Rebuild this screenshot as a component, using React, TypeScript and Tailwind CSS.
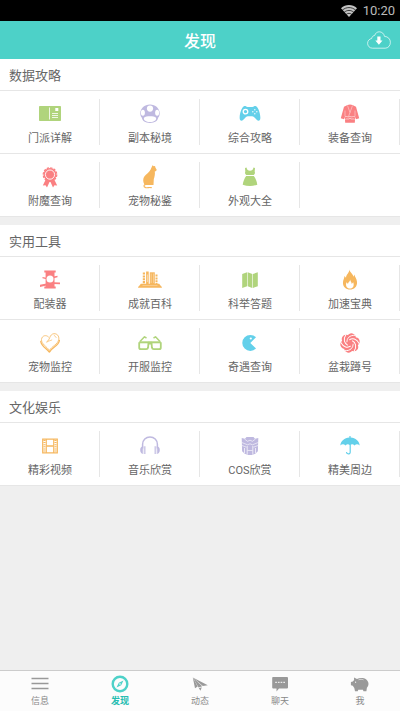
import type { ReactNode } from "react";

const RED = "#fa8082";
const GREEN = "#b0d47c";
const BLUE = "#63d0ea";
const ORANGE = "#f6b75e";
const PURPLE = "#bfb9e0";

function Icon({ children }: { children: ReactNode }) {
  return (
    <svg viewBox="0 0 24 24" className="size-6" fill="none" aria-hidden="true">
      {children}
    </svg>
  );
}

const BookIcon = () => (
  <Icon>
    <rect x="1" y="4" width="22" height="15" rx="0.7" fill={GREEN} />
    <path d="M11.5 5.500V17.500M14 11.500H20M14 13.500H20M14 15.500H20" stroke="#fff" strokeWidth="0.8" />
    <rect x="17.300" y="6" width="3" height="3" fill="#fff" />
  </Icon>
);

const MushroomIcon = () => (
  <Icon>
    <path d="M12 2.600C6.500 2.600 2.300 6.600 2.300 11.500c0 1.800.6 3.300 1.600 4.200.2 3 3.300 5.200 8.100 5.200s7.900-2.200 8.100-5.200c1-.9 1.600-2.400 1.600-4.200 0-4.900-4.200-8.900-9.700-8.900Z" fill={PURPLE} />
    <circle cx="12" cy="6.600" r="3.100" fill="#fff" />
    <ellipse cx="4.900" cy="10.800" rx="2" ry="3" fill="#fff" />
    <ellipse cx="19.100" cy="10.800" rx="2" ry="3" fill="#fff" />
    <path d="M6 15.700c2-1.900 10-1.900 12 0 .8 2.500-2 4.300-6 4.300s-6.800-1.800-6-4.300Z" fill="#fff" />
  </Icon>
);

const GamepadIcon = () => (
  <Icon>
    <path d="M6 4.200c1.600-.5 2.300.6 3.500.8h5c1.200-.2 1.900-1.300 3.500-.8 2.300.7 4.700 8 4.300 12.300-.2 2.500-2.100 2.900-3.600 1.300-1.900-2-3-3.600-4.700-3.600h-4c-1.700 0-2.800 1.600-4.700 3.600-1.500 1.600-3.400 1.200-3.600-1.300C1.300 12.200 3.700 4.900 6 4.200Z" fill={BLUE} />
    <circle cx="7.500" cy="9.600" r="2.300" stroke="#fff" strokeWidth="1.300" />
    <g fill="#fff" fillOpacity="0.850">
      <circle cx="16.800" cy="7.700" r="0.800" />
      <circle cx="16.800" cy="11.700" r="0.800" />
      <circle cx="14.800" cy="9.700" r="0.800" />
      <circle cx="18.800" cy="9.700" r="0.800" />
    </g>
  </Icon>
);

const RobeIcon = () => (
  <Icon>
    <path d="M9.500 3 12 2.500l2.500.5 3.500 1.700 3.200 11.500-3.200 1L17.200 15l-.4 5.800H7.200L6.800 15 6 17.200l-3.200-1L6 4.700Z" fill={RED} />
    <g stroke="#fff" strokeOpacity="0.800" strokeWidth="0.5">
      <path d="m9.500 3.500 2.500 7 2.500-7M12 10.500l-1.500 4M7 8.500v6M17 8.500v6" />
      <path d="M7 14.800c2-1 3 .8 5-.3 1.500.9 3-.5 5 .3M7.300 17.300c2-1 3 .5 4.700-1 1.700 1.500 2.700 0 4.700 1" strokeWidth="0.700" />
    </g>
  </Icon>
);

const MedalIcon = () => (
  <Icon>
    <path d="m7.500 15-2.700 5.500 2.700-.2 1.500 2.200 2.500-5.500h1l2.500 5.500 1.500-2.200 2.700.2-2.700-5.500Z" fill={RED} />
    <circle cx="12" cy="9.600" r="6.500" fill={RED} />
    <circle cx="12" cy="9.600" r="6.800" stroke={RED} strokeWidth="1.200" strokeDasharray="2.300 1.260" />
    <circle cx="12" cy="9.600" r="4.600" stroke="#fff" strokeWidth="0.9" />
  </Icon>
);

const CatIcon = () => (
  <Icon>
    <path d="m14.500.3 1.300 1 1.200-.4.500 1.900 1.200 2-.6 1.100-1.300.5c.4 3-.3 5.400-1 7.600l-.3 6H8.300l-2-.7c-1.500-2.500-1.500-5.700.2-8 1.500-2.100 4.900-4 6-6.600Z" fill={ORANGE} />
    <path d="M8.300 19.300c-3 .2-3 2.500-.6 3.300 2 .5 3.500-.5 5.600.1" stroke={ORANGE} strokeWidth="1.200" strokeLinecap="round" />
  </Icon>
);

const DressIcon = () => (
  <Icon>
    <path d="M8.500 2.500c.5 2.200 1.500 3.300 3.500 3.300s3-1.100 3.500-3.300l1.500.4-.3 3.600c.6 1.400.2 2.500-1 3.600H8.300c-1.200-1.100-1.600-2.200-1-3.600L7 2.900Z" fill={GREEN} />
    <path d="M8.200 11h7.600c1.700 2.300 3 5.300 3.500 8.700-4.800 1.700-9.800 1.700-14.600 0 .5-3.400 1.800-6.400 3.500-8.700Z" fill={GREEN} />
  </Icon>
);

const ArmorIcon = () => (
  <Icon>
    <path d="M6.300 2.500h11.400v2H16.500v14h1.200v2H6.300v-2h1.300v-14H6.300Z" fill={RED} />
    <path d="m2 16.800 6.500-1.200v2L2 19ZM4.500 9l4 .8v1.400l-4-.9ZM15.500 8.600l4-.9v1.600l-4 .9ZM15.500 14.300l6.500.3v1.700l-6.500-.3Z" fill={RED} />
    <circle cx="12" cy="11" r="3.500" fill="#fff" />
  </Icon>
);

const LibraryIcon = () => (
  <Icon>
    <path d="M0 19.800c0-1.500 1.800-1.800 2.800-4h18.400c1 2.200 2.800 2.500 2.800 4Z" fill={ORANGE} />
    <path d="M4.500 17.500h15" stroke="#fff" strokeOpacity="0.500" strokeWidth="0.600" />
    <path d="M5.900 4.600v11.400" stroke={ORANGE} strokeWidth="2.200" strokeDasharray="2 .8" />
    <path d="M9.400 3.500v12.500" stroke={ORANGE} strokeWidth="2.600" />
    <path d="M9.400 6.500v7.500" stroke="#fff" strokeWidth="0.700" strokeOpacity="0.700" />
    <path d="M11.800 4.300h5v11.700h-5Z" fill={ORANGE} />
    <path d="M13.200 5.500v9.500M15.600 5.500v9.500" stroke="#fff" strokeWidth="0.500" strokeOpacity="0.700" />
    <path d="M18.500 6.600v9.400" stroke={ORANGE} strokeWidth="2" strokeDasharray="2 .8" />
  </Icon>
);

const MapIcon = () => (
  <Icon>
    <path d="m4.200 6 4.900-1.700v13.900l-4.900 1.700ZM9.700 4.300 14.300 6v13.900l-4.600-1.700ZM14.900 6l4.900-1.700v13.900l-4.900 1.700Z" fill={GREEN} />
  </Icon>
);

const FlameIcon = () => (
  <Icon>
    <path d="M11.500 1.500c.2 3 3.500 4.200 4 7.300l.9-2.300c.3 2.500 2.300 3.700 2.600 7.200.5 5-3.100 7.800-7 7.800s-7.500-2.600-7-7.500c.2-2 1.200-3.500 1.500-6l1.500 1.700C8.200 6.500 11.200 5 11.500 1.500Z" fill={ORANGE} />
    <path d="M12.200 11.600c0 2 1.600 2.600 1.500 4.300l1.500-1.700c1.300 3.300-.1 6.300-3.200 6.300s-4.800-3-3.500-6.300l1.500 1.900c0-1.800 1.900-2.300 2.200-4.500Z" fill="#fff" />
  </Icon>
);

const HeartPetIcon = () => (
  <Icon>
    <g stroke={ORANGE} strokeLinecap="round" strokeLinejoin="round">
      <path d="M10.500 6C8.200 3.300 3.800 4.600 3.500 8.500c-.3 4.500 5.200 7 8 11 2-4.300 8.400-5.800 9.300-11.300C21.300 5 19 2.500 16 2.700c-2.300.2-3.400 1.700-4.300 4-.7 1.800-1.500 3.200-2.900 4.100" strokeWidth="0.8" />
      <path d="M2.800 10.500c.4 4.800 5.600 6.800 8.500 10.500M21.400 9.500c-.8 5.500-7.200 6.500-9.600 11.200" strokeWidth="1.300" />
      <path d="M9 11c1.800-1.300 3.300-1.200 4.800-2M16.400 4.500l1.700 2" strokeWidth="0.7" />
    </g>
  </Icon>
);

const GlassesIcon = () => (
  <Icon>
    <g stroke={GREEN} strokeWidth="1.800" strokeLinejoin="round">
      <path d="M1.200 11.300h21.600" strokeWidth="2" />
      <path d="M1.200 11.300v5.200q0 1.700 1.600 1.700h5.400q1.600 0 1.900-1.700l.4-5.200M13.500 11.300l.4 5.200q.3 1.700 1.900 1.700h5.400q1.600 0 1.600-1.700v-5.200" />
      <path d="m2 10.500 4.500-4.700 2 1.200M22 10.500l-4.500-4.700-2 1.200" strokeWidth="1.500" />
    </g>
    <path d="M10 10.800h4v2.700h-4Z" fill={GREEN} />
  </Icon>
);

const PacmanIcon = () => (
  <Icon>
    <path d="m18 6.300-5.700 5.600 5.700 5.600a8 8 0 1 1 0-11.200Z" fill={BLUE} />
    <circle cx="12.800" cy="7.500" r="1.100" fill="#fff" />
  </Icon>
);

const PETALS = [0, 60, 120, 180, 240, 300];

const SwirlIcon = () => (
  <Icon>
    {PETALS.map((a) => (
      <circle key={a} cx="12" cy="6.500" r="4.400" fill={RED} transform={`rotate(${a + 15} 12 12)`} />
    ))}
    <circle cx="12" cy="12" r="7" fill={RED} />
    {PETALS.map((a) => (
      <path
        key={a}
        transform={`rotate(${a} 12 12)`}
        d="M9 11.300C8.700 7.500 11.300 4 17.300 4.300"
        stroke="#fff"
        strokeWidth="0.950"
      />
    ))}
    <circle cx="12" cy="12" r="2.600" fill={RED} />
  </Icon>
);

const FilmIcon = () => (
  <Icon>
    <path d="M4.700 5.200h14.600v13.600H4.700Z" stroke={ORANGE} strokeWidth="1.200" />
    <path d="M8.300 5v14M15.700 5v14" stroke={ORANGE} strokeWidth="1.100" />
    <path d="M8.500 12h7" stroke={ORANGE} strokeWidth="1.500" />
    <path d="M6.500 6v12M17.500 6v12" stroke={ORANGE} strokeWidth="2.200" strokeDasharray="1 1.100" />
  </Icon>
);

const HeadphonesIcon = () => (
  <Icon>
    <path d="M4.600 14.500V10.300a7.400 7.400 0 0 1 14.800 0v4.200" stroke={PURPLE} strokeWidth="1.500" />
    <path d="M4.800 12.300v7.600c-1.600-.2-2.600-1.700-2.600-3.800s1-3.500 2.600-3.800ZM19.200 12.300v7.600c1.600-.2 2.600-1.700 2.600-3.800s-1-3.500-2.600-3.800Z" fill={PURPLE} />
    <path d="M6.600 12.200V20M17.400 12.200V20" stroke={PURPLE} strokeOpacity="0.750" strokeWidth="1.900" />
  </Icon>
);

const RobotIcon = () => (
  <Icon>
    <path d="M3.700 4 7 4.800 8.500 3h7L17 4.800l3.300-.8-.4 13.300-2.700 2.500-3 1.200H9.800l-3-1.200-2.700-2.500Z" fill={PURPLE} />
    <g stroke="#fff" strokeWidth="0.600">
      <path d="m6.500 5 3 2.300L12 6.200l2.500 1.100 3-2.300M3.800 8.500l5.700 2.300 2.500-1 2.500 1 5.700-2.300M4 11.500l4.500 1.700M20 11.500l-4.500 1.700" />
      <path d="M9.200 12v8.800M14.800 12v8.800M6.500 14v5M17.500 14v5" strokeWidth="0.700" />
      <path d="M9.500 16.500h5" />
    </g>
  </Icon>
);

const UmbrellaIcon = () => (
  <Icon>
    <path d="M11.400 2h1.200v1.400c5 .3 8.600 3.400 9.100 8-1.800-1.500-3.600-1.500-5.200 0-1.400-1.400-3-1.400-4.500-.2-1.500-1.200-3.100-1.200-4.500.2-1.600-1.500-3.400-1.500-5.200 0 .5-4.600 4.100-7.700 9.100-8Z" fill={BLUE} />
    <path d="M12.200 10.500v7.700c0 2.300-3.700 2.300-3.700-.2" stroke={BLUE} strokeWidth="1.200" />
  </Icon>
);

type Entry = { label: string; icon: () => ReactNode };
type SectionData = { title: string; items: Entry[] };

const sections: SectionData[] = [
  {
    title: "数据攻略",
    items: [
      { label: "门派详解", icon: BookIcon },
      { label: "副本秘境", icon: MushroomIcon },
      { label: "综合攻略", icon: GamepadIcon },
      { label: "装备查询", icon: RobeIcon },
      { label: "附魔查询", icon: MedalIcon },
      { label: "宠物秘鉴", icon: CatIcon },
      { label: "外观大全", icon: DressIcon },
    ],
  },
  {
    title: "实用工具",
    items: [
      { label: "配装器", icon: ArmorIcon },
      { label: "成就百科", icon: LibraryIcon },
      { label: "科举答题", icon: MapIcon },
      { label: "加速宝典", icon: FlameIcon },
      { label: "宠物监控", icon: HeartPetIcon },
      { label: "开服监控", icon: GlassesIcon },
      { label: "奇遇查询", icon: PacmanIcon },
      { label: "盆栽蹲号", icon: SwirlIcon },
    ],
  },
  {
    title: "文化娱乐",
    items: [
      { label: "精彩视频", icon: FilmIcon },
      { label: "音乐欣赏", icon: HeadphonesIcon },
      { label: "COS欣赏", icon: RobotIcon },
      { label: "精美周边", icon: UmbrellaIcon },
    ],
  },
];

function Section({ title, items }: SectionData) {
  const rows: Entry[][] = [];
  for (let i = 0; i < items.length; i += 4) rows.push(items.slice(i, i + 4));
  return (
    <section className="bg-white">
      <h2 className="border-b border-[#e6e6e6] px-[9px] text-[13px] leading-[31px] text-[#666]">{title}</h2>
      {rows.map((row) => (
        <div key={row[0].label} className="grid grid-cols-4 border-b border-[#e6e6e6]">
          {row.map(({ label, icon: Glyph }) => (
            <div key={label} className="flex">
              <button type="button" className="flex flex-1 flex-col items-center gap-[5px] pt-[11px] pb-1.5">
                <Glyph />
                <span className="font-[Roboto,'Noto_Sans_CJK_SC',sans-serif] text-[11px] leading-4 text-[#666]">
                  {label}
                </span>
              </button>
              <span className="my-2 -ml-px w-px bg-[#e6e6e6]" />
            </div>
          ))}
        </div>
      ))}
    </section>
  );
}

const tabs: { label: string; active?: boolean; drawing: ReactNode }[] = [
  {
    label: "信息",
    drawing: <path d="M1.500 4.500h17M1.500 9.500h17M1.500 14.500h17" stroke="#999" strokeWidth="1.700" />,
  },
  {
    label: "发现",
    active: true,
    drawing: (
      <>
        <circle cx="10" cy="10" r="7.300" stroke="#4dd1c8" strokeWidth="2.400" />
        <path d="m13.500 6.500-2.300 4.700L6.500 13.500l2.300-4.700Z" fill="#4dd1c8" />
        <circle cx="10" cy="10" r="0.800" fill="#fff" />
      </>
    ),
  },
  {
    label: "动态",
    drawing: (
      <>
        <path d="m2.800 3.500 15 7.700-5 .8Z" fill="#999" />
        <path d="M2.800 3.500 5 14.300l2.700-1.900Z" fill="#999" />
        <path d="m2.800 3.500 9.400 8.700-3.600 1.300Z" fill="#999" />
        <path d="m8.800 14.200 3-.9-1.300 3.500Z" fill="#999" />
      </>
    ),
  },
  {
    label: "聊天",
    drawing: (
      <>
        <path d="M3 3h14q1 0 1 1v9.500q0 1-1 1H9l-2.500 3v-3H3.200q-1 0-1-1V4q0-1 .8-1Z" fill="#999" />
        <path d="M5.200 8.300h10" stroke="#fff" strokeWidth="1" strokeDasharray="1.700 1" />
      </>
    ),
  },
  {
    label: "我",
    drawing: (
      <>
        <path d="M4 3.500 7 5c2.500-1.500 6.800-1.500 9.300.4 2.700 2.200 2.900 6 .6 8.300l-.5 3.500h-2.900l-.6-1.500H8.300l-.6 1.500H5l-.7-3.200-1.500-2.200-1.900-.6V8l1.900-.5 1.300-1.500Z" fill="#999" />
        <path d="M8.500 5.800c1.800-.6 3.500-.6 5 0" stroke="#fcfcfc" strokeWidth="0.600" />
        <circle cx="5.600" cy="8.200" r="0.600" fill="#fcfcfc" />
      </>
    ),
  },
];

export default function App() {
  return (
    <div className="flex min-h-screen flex-col bg-[#efefef] font-['Noto_Sans_CJK_SC',sans-serif]">
      <div className="flex h-[21px] items-center justify-end gap-1.5 bg-black pr-[5px] text-[#bbb]">
        <svg viewBox="0 0 16 12" className="h-3 w-4" fill="none" aria-hidden="true">
          <path d="M0 3.200C4.600-1 11.400-1 16 3.200L8 12Z" fill="#c4c4c4" />
          <path d="M1.300 5.200c3.900-3.500 9.500-3.500 13.400 0M3.200 7.300c2.800-2.500 6.800-2.500 9.600 0M5.200 9.400c1.700-1.400 3.900-1.400 5.600 0" stroke="#000" strokeWidth="0.700" />
        </svg>
        <time className="font-[Roboto,sans-serif] text-[13px] leading-5">10:20</time>
      </div>

      <header className="grid h-[38px] grid-cols-[1fr_auto_1fr] items-center bg-[#4dd1c8] text-white">
        <h1 className="col-start-2 text-base leading-6 font-medium">发现</h1>
        <button type="button" aria-label="下载" className="mr-[9px] justify-self-end">
          <svg viewBox="0 0 24 18" className="h-[18px] w-6" fill="none" aria-hidden="true">
            <path d="M5.500 17.200C2.500 17.200.6 14.900.6 12.300c0-2.500 1.800-4.400 4-4.800C5 5.500 6.500 4.500 7.700 4.400 8.500 2 10.200.8 12.300.8c2.600 0 4.700 1.900 5.200 4.600 3.500.1 5.900 2.700 5.900 5.900 0 3.300-2.200 5.900-5.200 5.900Z" stroke="#fff" strokeOpacity="0.750" strokeWidth="0.900" />
            <path d="M10.300 5.500h3.200v4h2l-3.600 4.300-3.600-4.300h2Z" fill="#fff" />
          </svg>
        </button>
      </header>

      <main className="flex flex-1 flex-col gap-2">
        {sections.map((s) => (
          <Section key={s.title} {...s} />
        ))}
      </main>

      <nav className="sticky bottom-0 grid grid-cols-5 border-t border-[#ccc] bg-[#fcfcfc]">
        {tabs.map(({ label, active, drawing }) => (
          <button
            key={label}
            type="button"
            aria-current={active ? "page" : undefined}
            className="flex flex-col items-center gap-px pt-[3px] pb-1"
          >
            <svg viewBox="0 0 20 20" className="size-5" fill="none" aria-hidden="true">
              {drawing}
            </svg>
            <span className={active ? "text-[9px] leading-3 font-bold text-[#26bdb1]" : "text-[9px] leading-3 text-[#888]"}>
              {label}
            </span>
          </button>
        ))}
      </nav>
    </div>
  );
}
